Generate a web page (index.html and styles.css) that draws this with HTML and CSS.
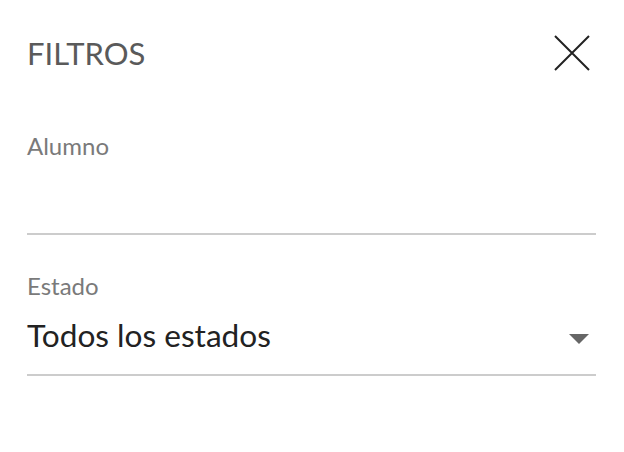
FILE: index.html
```html
<!DOCTYPE html>
<html lang="es">
  <head>
    <meta charset="UTF-8" />
    <meta name="viewport" content="width=device-width, initial-scale=1.0" />
    <title>Filtros</title>
    <link rel="stylesheet" href="styles.css">
  </head>
  <body>
    <div class="filters">
      <div class="filters-header">
        <h2>FILTROS</h2>
        <button class="close-btn" aria-label="Cerrar">
          <svg width="36" height="36" viewBox="0 0 36 36">
            <path d="M1 1 L35 35 M35 1 L1 35" stroke="#222222" stroke-width="2" fill="none" />
          </svg>
        </button>
      </div>
      <div class="field">
        <label for="alumno">Alumno</label>
        <input type="text" id="alumno" name="alumno" />
      </div>
      <div class="field field-select">
        <label for="estado">Estado</label>
        <div class="select" id="estado">
          <span class="select-value">Todos los estados</span>
          <span class="select-arrow"></span>
        </div>
      </div>
    </div>
  </body>
</html>
```

FILE: styles.css
```css
body {
  font-family: Lato, "Open Sans", sans-serif;
  background-color: #ffffff;
  margin: 0;
}
.filters {
  padding: 0 28px 0 27px;
}
.filters-header {
  display: flex;
  justify-content: space-between;
  align-items: center;
  height: 106px;
}
.filters-header h2 {
  margin: 0;
  font-size: 31px;
  font-weight: normal;
  color: #5a5a5a;
}
.close-btn {
  background: none;
  border: none;
  padding: 0;
  margin-right: 6px;
  display: flex;
  cursor: pointer;
}
.field {
  padding-top: 25px;
}
.field-select {
  padding-top: 36px;
}
.field label {
  display: block;
  font-size: 24px;
  color: #7a7a7a;
  line-height: 30px;
}
.field input {
  display: block;
  width: 100%;
  box-sizing: border-box;
  height: 74px;
  border: none;
  border-bottom: 2px solid #cccccc;
  outline: none;
  font-family: inherit;
  font-size: 32px;
  padding: 0;
}
.select {
  display: flex;
  justify-content: space-between;
  align-items: flex-start;
  height: 73px;
  border-bottom: 2px solid #cccccc;
}
.select-value {
  font-size: 31.6px;
  color: #222222;
  padding-top: 15px;
}
.select-arrow {
  align-self: center;
  width: 0;
  height: 0;
  border-left: 10px solid transparent;
  border-right: 10px solid transparent;
  border-top: 10px solid #666666;
  margin: 2px 7px 0 0;
}
```
